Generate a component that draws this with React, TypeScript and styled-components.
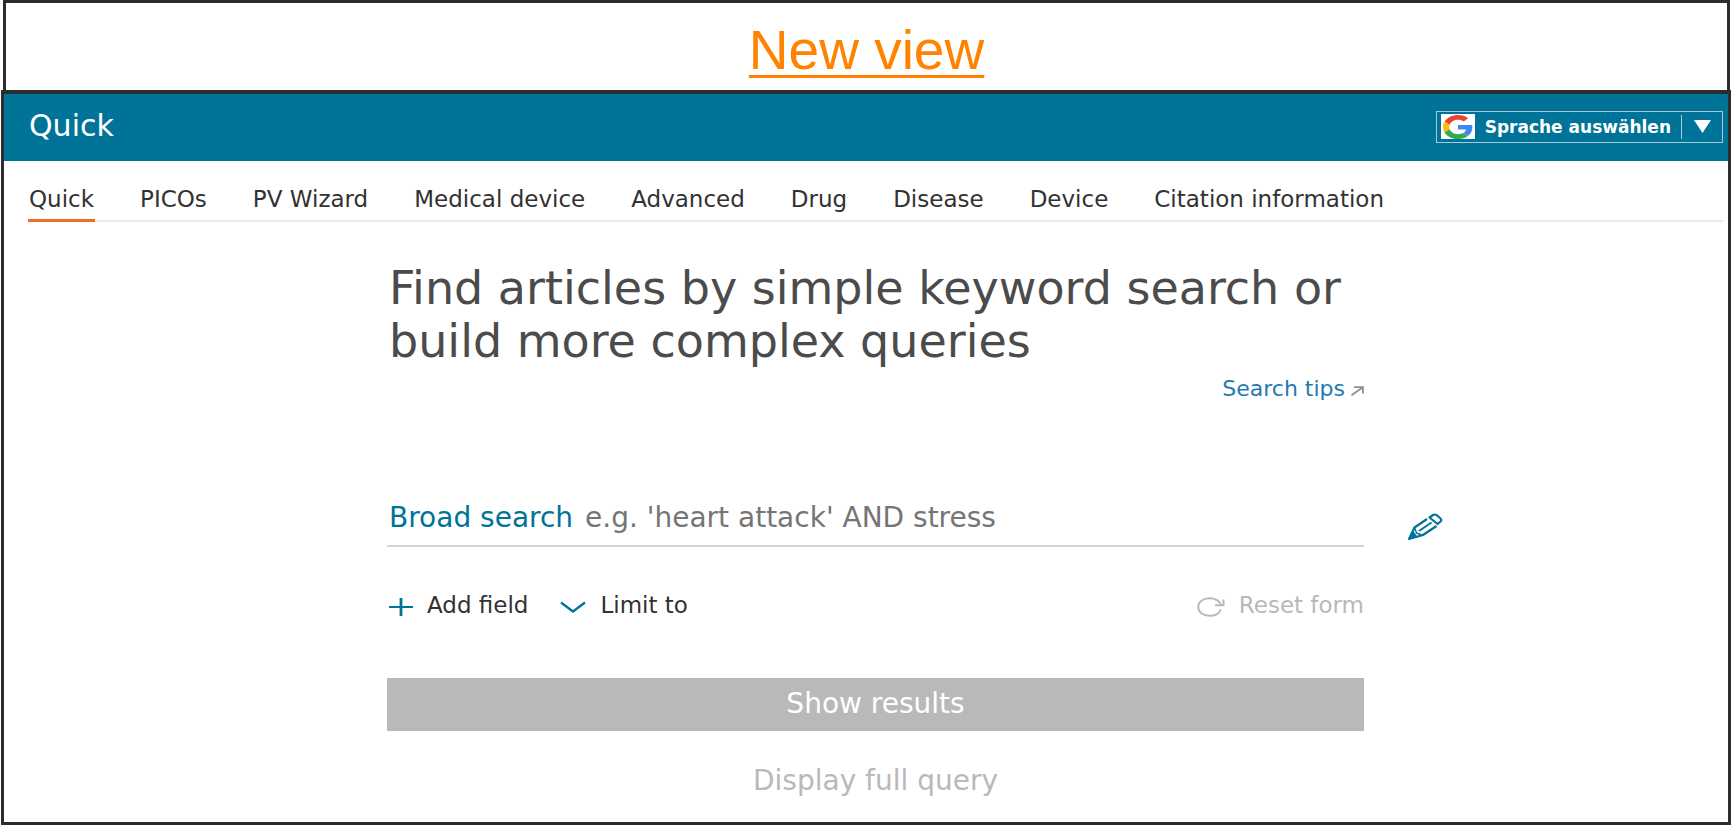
import React, { useState } from "react";
import styled, { createGlobalStyle } from "styled-components";

const ink = "#2d2d2d";
const teal = "#007398";
const muted = "#b9b9b9";

const GlobalStyle = createGlobalStyle`
  *, *::before, *::after { box-sizing: border-box; }
  body {
    margin: 0;
    background: #fff;
    color: #323232;
    font-family: "DejaVu Sans", sans-serif;
  }
  button, input {
    margin: 0;
    padding: 0;
    border: 0;
    background: none;
    font: inherit;
    color: inherit;
  }
  button { cursor: pointer; }
  svg { display: block; flex: none; }
`;

const Banner = styled.div`
  display: flex;
  justify-content: center;
  align-items: center;
  height: 90px;
  margin: 0 2px 0 3px;
  padding-top: 6px;
  border: 3px solid ${ink};
  border-bottom: 0;
`;

const BannerLink = styled.a`
  color: #ff8200;
  font: 55px/60px "Liberation Sans", sans-serif;
  text-decoration: underline;
  text-decoration-thickness: 3px;
  text-underline-offset: 6px;
`;

const Frame = styled.div`
  margin: 0 1px;
  border: 3px solid ${ink};
  border-top-width: 4px;
`;

const Header = styled.header`
  display: flex;
  justify-content: space-between;
  align-items: center;
  height: 67px;
  padding: 0 5px 2px 25px;
  background: ${teal};
  color: #fff;
`;

const PageTitle = styled.h1`
  margin: 0 0 2px;
  font-size: 30px;
  line-height: 36px;
  font-weight: 400;
`;

const LanguageButton = styled.button`
  display: flex;
  align-items: center;
  height: 32px;
  padding: 0 11px 0 4px;
  border: 1px solid #a9c9d6;
  font-size: 17px;
  font-weight: 700;
`;

const LogoTile = styled.span`
  display: grid;
  place-items: center;
  width: 34px;
  height: 25px;
  margin-right: 10px;
  background: #fff;
`;

const Divider = styled.span`
  width: 1px;
  height: 24px;
  margin: 0 12px 0 10px;
  background: #a9c9d6;
`;

const Tabs = styled.nav`
  display: flex;
  gap: 44px;
  margin: 0 5px 0 24px;
  padding-top: 23px;
  border-bottom: 2px solid #e9e9e9;
`;

const Tab = styled.a<{ $active?: boolean }>`
  margin-bottom: -2px;
  padding: 0 1px 5px;
  border-bottom: 3px solid ${(p) => (p.$active ? "#f36d21" : "transparent")};
  color: inherit;
  font-size: 23px;
  line-height: 30px;
  white-space: nowrap;
  text-decoration: none;
`;

const Main = styled.main`
  display: grid;
  grid-template-columns: 383fr 977fr 364fr;
  padding: 40px 0 21px;
`;

const SearchForm = styled.form`
  grid-column: 2;
  display: flex;
  flex-direction: column;
`;

const Heading = styled.h2`
  margin: 0;
  padding-left: 2px;
  color: #4b4b4b;
  font-size: 46px;
  line-height: 53px;
  font-weight: 400;
`;

const TipsLink = styled.a`
  display: flex;
  align-items: center;
  align-self: flex-end;
  gap: 6px;
  margin-top: 9px;
  color: #1f7ab0;
  font-size: 22px;
  line-height: 24px;
  text-decoration: none;

  svg { margin-top: 4px; }
`;

const QueryRow = styled.div`
  display: grid;
  grid-template-columns: 100% auto;
  align-items: center;
  margin-top: 97px;
`;

const QueryField = styled.div`
  display: flex;
  align-items: baseline;
  gap: 12px;
  padding: 0 0 7px 2px;
  border-bottom: 2px solid #d4d4d4;
  font-size: 28px;
  line-height: 40px;
`;

const QueryLabel = styled.label`
  color: ${teal};
  white-space: nowrap;
`;

const QueryInput = styled.input`
  flex: 1;
  min-width: 0;
  height: 40px;
  outline: 0;
  &::placeholder { color: #757575; opacity: 1; }
`;

const EditButton = styled.button`
  width: 36px;
  margin: 8px 0 0 43px;
`;

const Actions = styled.div`
  display: flex;
  gap: 32px;
  margin-top: 43px;
  padding: 0 0 0 2px;
`;

const Action = styled.button<{ $muted?: boolean }>`
  display: flex;
  align-items: center;
  gap: 14px;
  margin-left: ${(p) => (p.$muted ? "auto" : "0")};
  color: ${(p) => (p.$muted ? muted : "inherit")};
  font-size: 23px;
  line-height: 30px;
  white-space: nowrap;

  svg { margin-top: 4px; }
`;

const SubmitButton = styled.button`
  height: 53px;
  margin-top: 58px;
  padding-bottom: 2px;
  background: ${muted};
  color: #fff;
  font-size: 28px;
`;

const FullQueryButton = styled.button`
  align-self: center;
  margin-top: 30px;
  color: ${muted};
  font-size: 28px;
  line-height: 40px;
`;

const GoogleLogo = () => (
  <svg width="30" height="24" viewBox="0 0 48 48" preserveAspectRatio="none" aria-hidden="true">
    <path fill="#EA4335" d="M24 9.5c3.54 0 6.71 1.22 9.21 3.6l6.85-6.85C35.9 2.38 30.47 0 24 0 14.62 0 6.51 5.38 2.56 13.22l7.98 6.19C12.43 13.72 17.74 9.5 24 9.5z" />
    <path fill="#4285F4" d="M46.98 24.55c0-1.57-.15-3.09-.38-4.55H24v9.02h12.94c-.58 2.96-2.26 5.48-4.78 7.18l7.73 6c4.51-4.18 7.09-10.36 7.09-17.65z" />
    <path fill="#FBBC05" d="M10.53 28.59c-.48-1.45-.76-2.99-.76-4.59s.27-3.14.76-4.59l-7.98-6.19C.92 16.46 0 20.12 0 24c0 3.88.92 7.54 2.56 10.78l7.97-6.19z" />
    <path fill="#34A853" d="M24 48c6.48 0 11.93-2.13 15.89-5.81l-7.73-6c-2.15 1.45-4.92 2.3-8.16 2.3-6.26 0-11.57-4.22-13.47-9.91l-7.98 6.19C6.51 42.62 14.62 48 24 48z" />
  </svg>
);

const TriangleIcon = () => (
  <svg width="17" height="13" viewBox="0 0 17 13" aria-hidden="true">
    <path d="M0 0h17L8.5 13z" fill="#fff" />
  </svg>
);

const ExternalIcon = () => (
  <svg width="13" height="10" viewBox="0 0 13 10" fill="none" stroke="#8f8f8f" strokeWidth="1.8" aria-hidden="true">
    <path d="M.5 9.200 11.500 1.500M3 1.200h9v6.300" />
  </svg>
);

const PencilIcon = () => (
  <svg width="36" height="28" viewBox="0 0 36 28" fill="none" stroke={teal} strokeWidth="2.2" strokeLinejoin="round" aria-hidden="true">
    <path d="M20 6 7.500 14.500 2 26l14-4L29.500 13" />
    <path d="M22.500 4.500 26 2q1.500-1 3.500 0l4 3.500q1.500 1.500 0 3L30.500 11z" />
    <path d="M24.500 9.500 12 18" strokeWidth="2" />
    <path d="M6.500 18 1.500 26.500l9-2.500z" fill={teal} stroke="none" />
    <path d="M8 15.500 9.500 20 15 22" strokeWidth="1.400" />
  </svg>
);

const PlusIcon = () => (
  <svg width="24" height="18" viewBox="0 0 24 18" stroke={teal} aria-hidden="true">
    <path d="M0 9h24" strokeWidth="2" />
    <path d="M12 0v18" strokeWidth="2.800" />
  </svg>
);

const ChevronIcon = () => (
  <svg width="26" height="12" viewBox="0 0 26 12" fill="none" stroke={teal} strokeWidth="2.200" aria-hidden="true">
    <path d="M1 1.500 13 10.500 25 1.500" />
  </svg>
);

const ResetIcon = () => (
  <svg width="28" height="20" viewBox="0 0 28 20" fill="none" stroke={muted} strokeWidth="2" aria-hidden="true">
    <path d="M24 7.500C22 3.500 17.500 1.200 12.500 1.200 6 1.200 1.200 5 1.200 10s4.800 8.800 11.300 8.800c5.500 0 9.800-2.300 11.300-6.500" />
    <path d="M26.500 2.500v5.700H18" />
  </svg>
);

const tabs = [
  "Quick",
  "PICOs",
  "PV Wizard",
  "Medical device",
  "Advanced",
  "Drug",
  "Disease",
  "Device",
  "Citation information",
];

export default function App() {
  const [query, setQuery] = useState("");
  const [active, setActive] = useState("Quick");

  return (
    <>
      <GlobalStyle />
      <Banner>
        <BannerLink href="#new-view">New view</BannerLink>
      </Banner>
      <Frame>
        <Header>
          <PageTitle>Quick</PageTitle>
          <LanguageButton type="button">
            <LogoTile><GoogleLogo /></LogoTile>
            Sprache auswählen
            <Divider />
            <TriangleIcon />
          </LanguageButton>
        </Header>
        <Tabs>
          {tabs.map((name) => (
            <Tab key={name} href="#search" $active={name === active} onClick={() => setActive(name)}>
              {name}
            </Tab>
          ))}
        </Tabs>
        <Main>
          <SearchForm onSubmit={(e) => e.preventDefault()}>
            <Heading>
              Find articles by simple keyword search or
              <br />
              build more complex queries
            </Heading>
            <TipsLink href="#tips">
              Search tips
              <ExternalIcon />
            </TipsLink>
            <QueryRow>
              <QueryField>
                <QueryLabel htmlFor="query">Broad search</QueryLabel>
                <QueryInput
                  id="query"
                  value={query}
                  onChange={(e) => setQuery(e.target.value)}
                  placeholder="e.g. 'heart attack' AND stress"
                />
              </QueryField>
              <EditButton type="button" aria-label="Edit query"><PencilIcon /></EditButton>
            </QueryRow>
            <Actions>
              <Action type="button"><PlusIcon />Add field</Action>
              <Action type="button"><ChevronIcon />Limit to</Action>
              <Action type="button" $muted onClick={() => setQuery("")}><ResetIcon />Reset form</Action>
            </Actions>
            <SubmitButton type="submit">Show results</SubmitButton>
            <FullQueryButton type="button">Display full query</FullQueryButton>
          </SearchForm>
        </Main>
      </Frame>
    </>
  );
}
